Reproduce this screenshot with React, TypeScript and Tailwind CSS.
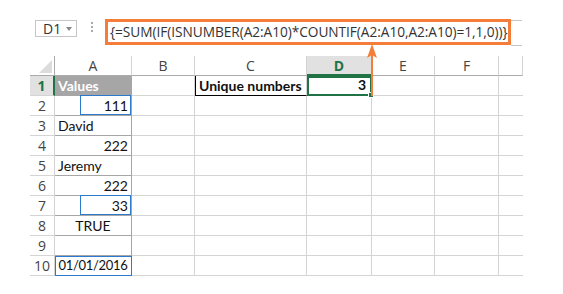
import React from "react"

const cols = ["A", "B", "C", "D", "E", "F", ""]

type Row = { a?: string; align?: string; blue?: string }

const rows: Row[] = [
  { a: "Values" },
  { a: "111", align: "right", blue: "part" },
  { a: "David" },
  { a: "222", align: "right" },
  { a: "Jeremy" },
  { a: "222", align: "right" },
  { a: "33", align: "right", blue: "part" },
  { a: "TRUE", align: "center" },
  {},
  { a: "01/01/2016", align: "center", blue: "full" },
]

const cell = "h-[20px] border-r border-b border-[#d4d4d4]"
const txt = "text-[14px] leading-[19px] text-[#111] font-['Lato','Liberation_Sans',sans-serif]"

export default function App() {
  return (
    <div className="relative h-[294px] w-[563px] overflow-hidden bg-white">
      {/* formula bar */}
      <div className="flex items-start pl-[35px] pt-[19px]">
        <div className="mt-[1px] flex h-[17px] w-[42px] items-center border border-[#c6c6c6] pl-[7px] text-[14px] text-[#333] font-['Open_Sans',sans-serif]">
          D1
          <span className="ml-[5px] h-0 w-0 border-x-[3px] border-t-[4px] border-x-transparent border-t-[#888]" />
        </div>
        <div className="ml-[13px] mt-[3px] flex w-[4px] flex-col items-center gap-[2px]">
          <span className="h-[2px] w-[2px] bg-[#aaa]" />
          <span className="h-[2px] w-[2px] bg-[#aaa]" />
          <span className="h-[2px] w-[2px] bg-[#aaa]" />
        </div>
        <div className="ml-[11px] flex">
          <div className="flex h-[26px] w-[406px] items-center border-[3px] border-[#f47d3a] pl-[2px] text-[13.7px] tracking-[-0.05px] text-[#333] font-['Open_Sans',sans-serif]">
            {"{=SUM(IF(ISNUMBER(A2:A10)*COUNTIF(A2:A10,A2:A10)=1,1,0))}"}
          </div>
          <div className="mt-[1px] h-[26px] w-[11px] border-y border-[#c6c6c6]" />
        </div>
      </div>

      {/* sheet */}
      <div className="ml-[30px] mt-[10px] grid w-[493px] grid-cols-[25px_77px_63px_112px_65px_63px_64px_24px]">
        <div className="relative h-[20px] border-r border-b border-[#ababab]">
          <span className="absolute bottom-[2px] right-[2px] h-0 w-0 border-l-[13px] border-l-transparent [border-bottom:13px_solid_#dcdcdc]" />
        </div>
        {cols.map((c) => (
          <div
            key={c || "g"}
            className={`flex h-[20px] items-center justify-center border-r text-[14px] font-['Open_Sans',sans-serif] ${
              c === "D"
                ? "border-b-2 border-r-[#d4d4d4] border-b-[#217346] bg-[#e1e1e1] font-bold text-[#217346]"
                : "border-b border-[#d4d4d4] border-b-[#ababab] text-[#444]"
            }`}
          >
            {c}
          </div>
        ))}

        {rows.map((r, i) => {
          const first = i === 0
          return (
            <React.Fragment key={i}>
              <div
                className={`flex h-[20px] items-center justify-center border-b text-[14px] font-['Open_Sans',sans-serif] ${
                  first
                    ? "border-r-2 border-r-[#217346] border-b-[#d4d4d4] bg-[#e1e1e1] font-bold text-[#217346]"
                    : "border-r border-[#d4d4d4] text-[#444]"
                }`}
              >
                {i + 1}
              </div>
              <div
                className={`relative flex h-[20px] items-end border-r border-b border-[#a6a6a6] px-[3px] ${txt} ${
                  first ? "bg-[#a6a6a6] font-bold text-white" : ""
                } ${r.align === "right" ? "justify-end" : r.align === "center" ? "justify-center" : ""} ${
                  r.blue === "full" ? "outline outline-1 -outline-offset-1 outline-[#2b79d0]" : ""
                }`}
              >
                {r.blue === "part" && (
                  <span className="absolute -top-[1px] bottom-0 left-[25px] right-0 border border-[#2b79d0]" />
                )}
                <span className={first ? "text-white" : r.blue === "full" ? "text-[13px] tracking-[-0.3px]" : ""}>{r.a}</span>
              </div>
              <div className={cell} />
              {first ? (
                <div className={`flex h-[20px] items-end border-l border-b border-r border-l-black border-b-black border-r-[#d4d4d4] pl-[3px] font-bold ${txt}`}>
                  Unique numbers
                </div>
              ) : (
                <div className={cell} />
              )}
              {first ? (
                <div className={`relative flex h-[20px] items-end justify-end border-2 border-[#217346] pr-[4px] font-bold ${txt}`}>
                  3
                  <span className="absolute -bottom-[4px] -right-[4px] h-[6px] w-[6px] border border-white bg-[#217346]" />
                </div>
              ) : (
                <div className={cell} />
              )}
              <div className={cell} />
              <div className={cell} />
              <div className="h-[20px] border-b border-[#d4d4d4]" />
            </React.Fragment>
          )
        })}
      </div>

      {/* arrow */}
      <svg className="absolute left-[365px] top-[44px]" width="14" height="52" viewBox="0 0 14 52">
        <line x1="7" y1="8" x2="7" y2="52" stroke="#f47d3a" strokeWidth="2" />
        <path d="M7 0 L12 14 L7 11 L2 14 Z" fill="#f47d3a" />
      </svg>
    </div>
  )
}
